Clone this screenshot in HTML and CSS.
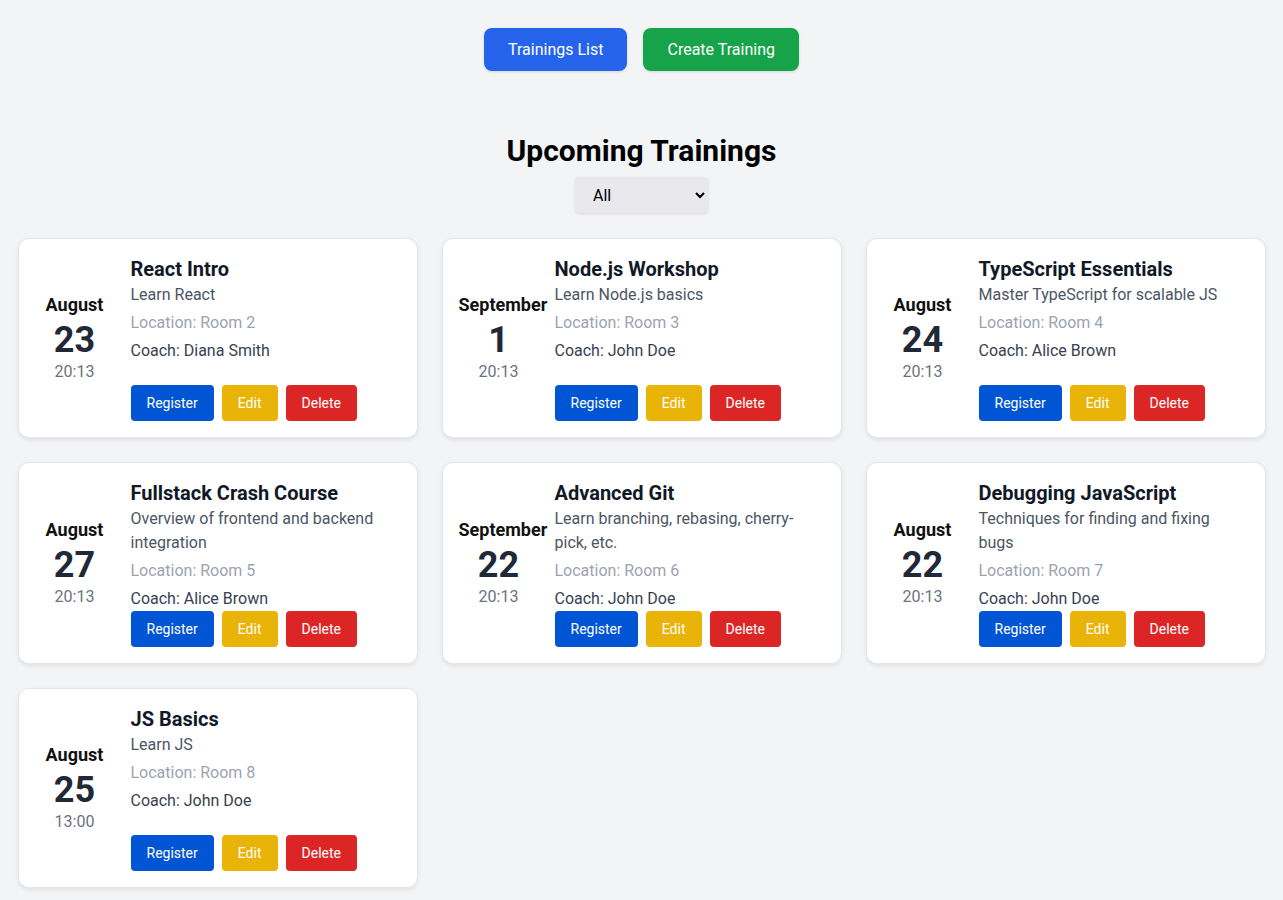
FILE: index.html
```html
<!DOCTYPE html>
<html lang="en">
<head>
<meta charset="utf-8">
<title>Trainings</title>
<link rel="stylesheet" href="styles.css">
</head>
<body>
<nav class="nav">
  <button class="nav-btn nav-btn-blue">Trainings List</button>
  <button class="nav-btn nav-btn-green">Create Training</button>
</nav>
<main class="page">
  <h1 class="title">Upcoming Trainings</h1>
  <div class="filter-wrap">
    <select class="filter">
      <option>All</option>
    </select>
  </div>
  <div class="grid">
    <div class="card">
      <div class="date"><div class="month">August</div><div class="day">23</div><div class="time">20:13</div></div>
      <div class="info">
        <h2 class="name">React Intro</h2>
        <p class="desc">Learn React</p>
        <p class="loc">Location: Room 2</p>
        <p class="coach">Coach: Diana Smith</p>
        <div class="actions"><button class="btn btn-reg">Register</button><button class="btn btn-edit">Edit</button><button class="btn btn-del">Delete</button></div>
      </div>
    </div>
    <div class="card">
      <div class="date"><div class="month">September</div><div class="day">1</div><div class="time">20:13</div></div>
      <div class="info">
        <h2 class="name">Node.js Workshop</h2>
        <p class="desc">Learn Node.js basics</p>
        <p class="loc">Location: Room 3</p>
        <p class="coach">Coach: John Doe</p>
        <div class="actions"><button class="btn btn-reg">Register</button><button class="btn btn-edit">Edit</button><button class="btn btn-del">Delete</button></div>
      </div>
    </div>
    <div class="card">
      <div class="date"><div class="month">August</div><div class="day">24</div><div class="time">20:13</div></div>
      <div class="info">
        <h2 class="name">TypeScript Essentials</h2>
        <p class="desc">Master TypeScript for scalable JS</p>
        <p class="loc">Location: Room 4</p>
        <p class="coach">Coach: Alice Brown</p>
        <div class="actions"><button class="btn btn-reg">Register</button><button class="btn btn-edit">Edit</button><button class="btn btn-del">Delete</button></div>
      </div>
    </div>
    <div class="card">
      <div class="date"><div class="month">August</div><div class="day">27</div><div class="time">20:13</div></div>
      <div class="info">
        <h2 class="name">Fullstack Crash Course</h2>
        <p class="desc">Overview of frontend and backend integration</p>
        <p class="loc">Location: Room 5</p>
        <p class="coach">Coach: Alice Brown</p>
        <div class="actions"><button class="btn btn-reg">Register</button><button class="btn btn-edit">Edit</button><button class="btn btn-del">Delete</button></div>
      </div>
    </div>
    <div class="card">
      <div class="date"><div class="month">September</div><div class="day">22</div><div class="time">20:13</div></div>
      <div class="info">
        <h2 class="name">Advanced Git</h2>
        <p class="desc">Learn branching, rebasing, cherry-pick, etc.</p>
        <p class="loc">Location: Room 6</p>
        <p class="coach">Coach: John Doe</p>
        <div class="actions"><button class="btn btn-reg">Register</button><button class="btn btn-edit">Edit</button><button class="btn btn-del">Delete</button></div>
      </div>
    </div>
    <div class="card">
      <div class="date"><div class="month">August</div><div class="day">22</div><div class="time">20:13</div></div>
      <div class="info">
        <h2 class="name">Debugging JavaScript</h2>
        <p class="desc">Techniques for finding and fixing bugs</p>
        <p class="loc">Location: Room 7</p>
        <p class="coach">Coach: John Doe</p>
        <div class="actions"><button class="btn btn-reg">Register</button><button class="btn btn-edit">Edit</button><button class="btn btn-del">Delete</button></div>
      </div>
    </div>
    <div class="card">
      <div class="date"><div class="month">August</div><div class="day">25</div><div class="time">13:00</div></div>
      <div class="info">
        <h2 class="name">JS Basics</h2>
        <p class="desc">Learn JS</p>
        <p class="loc">Location: Room 8</p>
        <p class="coach">Coach: John Doe</p>
        <div class="actions"><button class="btn btn-reg">Register</button><button class="btn btn-edit">Edit</button><button class="btn btn-del">Delete</button></div>
      </div>
    </div>
  </div>
</main>
</body>
</html>
```
FILE: styles.css
```css
* { box-sizing: border-box; }
html, body { margin: 0; padding: 0; }
body {
  background: #f3f4f6;
  font-family: Roboto, "Noto Sans", sans-serif;
  color: #111827;
  font-size: 16px;
}
.nav {
  display: flex;
  justify-content: center;
  gap: 16px;
  padding-top: 28px;
}
.nav-btn {
  font-family: inherit;
  font-size: 16px;
  line-height: 23px;
  color: #fff;
  border: none;
  border-radius: 8px;
  padding: 10px 24px;
  box-shadow: 0 1px 3px rgba(0,0,0,0.12);
  cursor: pointer;
}
.nav-btn-blue { background: #2563eb; }
.nav-btn-green { background: #16a34a; }
.page {
  padding: 0 17.5px 12px;
}
.title {
  margin: 62px 0 0;
  text-align: center;
  font-size: 30px;
  line-height: 36px;
  font-weight: 700;
  color: #000;
}
.filter-wrap {
  display: flex;
  justify-content: center;
  margin-top: 8px;
  margin-bottom: 25px;
}
.filter {
  font-family: inherit;
  font-size: 16px;
  width: 133px;
  height: 36px;
  padding: 0 10px 0 14px;
  border: none;
  border-radius: 4px;
  background-color: #e8e8ed;
  color: #000;
  box-shadow: 0 1px 3px rgba(0,0,0,0.12);
}
.grid {
  display: grid;
  grid-template-columns: repeat(3, 1fr);
  gap: 24px;
}
.card {
  display: flex;
  gap: 16px;
  min-height: 200px;
  background: #fff;
  border: 1px solid #e5e7eb;
  border-radius: 11px;
  padding: 16px;
  box-shadow: 0 2px 4px rgba(0,0,0,0.08);
}
.date {
  width: 80px;
  flex-shrink: 0;
  align-self: center;
  text-align: center;
  white-space: nowrap;
}
.month {
  font-size: 18px;
  line-height: 26px;
  font-weight: 700;
  color: #111;
  margin-bottom: 2px;
}
.day {
  font-size: 36px;
  line-height: 40px;
  font-weight: 700;
  color: #1f2937;
}
.time {
  font-size: 16px;
  line-height: 24px;
  color: #6b7280;
}
.info {
  display: flex;
  flex-direction: column;
  flex: 1;
  min-width: 0;
}
.name {
  margin: 0;
  font-size: 20px;
  line-height: 28px;
  font-weight: 700;
  color: #111827;
}
.desc, .loc, .coach {
  margin: 0;
  font-size: 16px;
  line-height: 24px;
}
.desc { color: #4b5563; }
.loc { color: #9ca3af; margin-top: 4px; }
.coach { color: #374151; margin-top: 4px; }
.actions {
  display: flex;
  gap: 8px;
  margin-top: auto;
}
.btn {
  font-family: inherit;
  font-size: 14px;
  line-height: 20px;
  color: #fff;
  border: none;
  border-radius: 4px;
  padding: 8px 16px;
  cursor: pointer;
}
.btn-reg { background: #0055d4; }
.btn-edit { background: #eab308; }
.btn-del { background: #dc2626; }
```
